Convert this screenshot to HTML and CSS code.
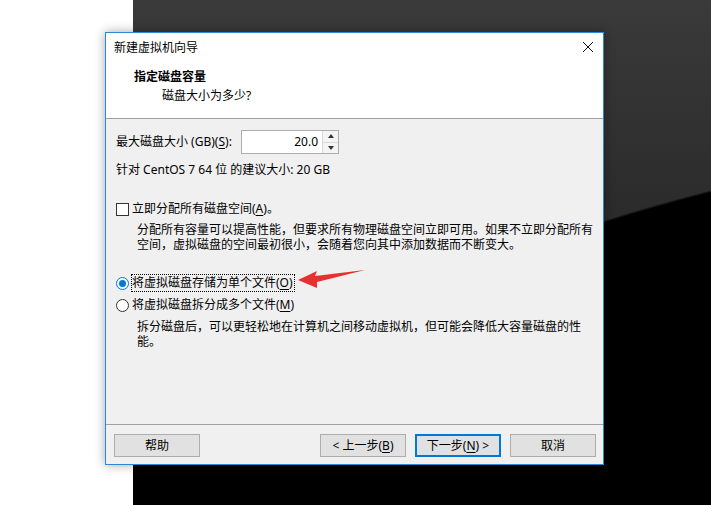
FILE: index.html
```html
<!DOCTYPE html>
<html>
<head>
    <title>新建虚拟机向导</title>
    <link rel="stylesheet" href="styles.css">
</head>
<body>
    <div class="wizard">
        <!-- 标题栏 -->
        <div class="titlebar">
            <span class="titlebar-text">新建虚拟机向导</span>
            <svg class="close-icon" width="12" height="12" viewBox="0 0 12 12">
                <path d="M1 1 L11 11 M11 1 L1 11" stroke="#111" stroke-width="1" fill="none"/>
            </svg>
        </div>

        <!-- 步骤说明 -->
        <div class="wizard-header">
            <div class="step-title">指定磁盘容量</div>
            <div class="step-sub">磁盘大小为多少?</div>
        </div>

        <div class="wizard-body">
            <div class="size-row">
                <div class="size-label">最大磁盘大小 (GB)(<u>S</u>):</div>
                <div class="spin">
                    <div class="spin-value">20.0</div>
                    <div class="spin-btns">
                        <div class="spin-btn"><span class="tri-up"></span></div>
                        <div class="spin-btn"><span class="tri-down"></span></div>
                    </div>
                </div>
            </div>
            <div class="hint">针对 CentOS 7 64 位 的建议大小: 20 GB</div>

            <div class="option-row check-row">
                <span class="checkbox"></span>
                <span>立即分配所有磁盘空间(<u>A</u>)。</span>
            </div>
            <div class="desc">分配所有容量可以提高性能，但要求所有物理磁盘空间立即可用。如果不立即分配所有空间，虚拟磁盘的空间最初很小，会随着您向其中添加数据而不断变大。</div>

            <div class="option-row radio-row first-radio">
                <span class="radio checked"></span>
                <span class="focus-label">将虚拟磁盘存储为单个文件(<u>O</u>)</span>
            </div>
            <div class="option-row radio-row">
                <span class="radio"></span>
                <span class="plain-label">将虚拟磁盘拆分成多个文件(<u>M</u>)</span>
            </div>
            <div class="desc desc-split">拆分磁盘后，可以更轻松地在计算机之间移动虚拟机，但可能会降低大容量磁盘的性能。</div>
        </div>

        <!-- 标注箭头 -->
        <svg class="note-arrow" width="72" height="30" viewBox="0 0 72 30">
            <polygon points="2,14 21,5 19,10 69,4 21,16 21,22" fill="#e8312f"/>
        </svg>

        <!-- 底部按钮 -->
        <div class="wizard-footer">
            <div class="btn">帮助</div>
            <div class="btn btn-back">&lt; 上一步(<u>B</u>)</div>
            <div class="btn btn-default">下一步(<u>N</u>) &gt;</div>
            <div class="btn">取消</div>
        </div>
    </div>
</body>
</html>
```

FILE: styles.css
```css
body {
    margin: 0;
    height: 505px;
    overflow: hidden;
    font-family: "Noto Sans", "Noto Sans CJK SC", sans-serif;
    font-size: 12px;
    color: #000;
    background:
        linear-gradient(to right, #fff 133px, transparent 133px),
        radial-gradient(ellipse 1200px 536px at 1300px 657px, #000 99.6%, rgba(0,0,0,0) 100%),
        linear-gradient(to bottom, transparent 464px, #000 464px),
        linear-gradient(#3a3a3a, #2a2a2a 230px);
}
u {
    text-decoration: underline;
    text-underline-offset: 2px;
}
.wizard {
    position: relative;
    margin: 32px 0 0 105px;
    width: 499px;
    height: 433px;
    box-sizing: border-box;
    border: 1px solid #2b88d8;
    background: #f0f0f0;
    display: flex;
    flex-direction: column;
    box-shadow: 0 0 10px rgba(0,0,0,0.35);
}
.titlebar {
    height: 29px;
    background: #fff;
    display: flex;
    align-items: center;
    justify-content: space-between;
    padding: 0 9px 0 8px;
}
.titlebar-text {
    line-height: 29px;
}
.close-icon {
    margin-bottom: 1px;
}
.wizard-header {
    background: #fff;
    padding: 7px 0 14px 28px;
    border-bottom: 1px solid #a0a0a0;
}
.step-title {
    font-weight: bold;
    line-height: 16px;
}
.step-sub {
    line-height: 16px;
    margin-top: 3px;
    padding-left: 28px;
}
.wizard-body {
    flex: 1;
    padding: 11px 0 0 10px;
}
.size-row {
    display: flex;
    align-items: center;
    height: 24px;
}
.size-label {
    width: 125px;
    line-height: 24px;
}
.spin {
    display: flex;
    width: 98px;
    height: 24px;
    box-sizing: border-box;
    border: 1px solid #adadad;
    background: #fff;
}
.spin-value {
    flex: 1;
    text-align: right;
    line-height: 22px;
    padding-right: 4px;
}
.spin-btns {
    width: 15px;
    display: flex;
    flex-direction: column;
    border-left: 1px solid #d9d9d9;
    background: #f4f4f4;
}
.spin-btn {
    flex: 1;
    display: flex;
    align-items: center;
    justify-content: center;
}
.spin-btn + .spin-btn {
    border-top: 1px solid #d9d9d9;
}
.tri-up {
    border-left: 3px solid transparent;
    border-right: 3px solid transparent;
    border-bottom: 4px solid #333;
}
.tri-down {
    border-left: 3px solid transparent;
    border-right: 3px solid transparent;
    border-top: 4px solid #333;
}
.hint {
    margin-top: 8px;
    line-height: 16px;
}
.option-row {
    display: flex;
    align-items: center;
}
.check-row {
    margin-top: 23px;
    line-height: 16px;
}
.checkbox {
    width: 13px;
    height: 13px;
    box-sizing: border-box;
    border: 1px solid #333;
    background: #fff;
    margin-right: 3px;
}
.desc {
    margin-top: 5px;
    padding-left: 21px;
    width: 460px;
    line-height: 15px;
}
.radio-row {
    line-height: 16px;
    height: 18px;
}
.first-radio {
    margin-top: 22px;
}
.first-radio + .radio-row {
    margin-top: 4px;
}
.radio {
    width: 13px;
    height: 13px;
    box-sizing: border-box;
    border: 1px solid #333;
    border-radius: 50%;
    background: #fff;
    margin-right: 2px;
    display: flex;
    align-items: center;
    justify-content: center;
}
.radio.checked {
    border-color: #0078d7;
}
.radio.checked::after {
    content: "";
    width: 7px;
    height: 7px;
    border-radius: 50%;
    background: #0078d7;
}
.focus-label {
    border: 1px dotted #000;
    padding: 0 1px 0 0;
    line-height: 16px;
}
.plain-label {
    padding-left: 1px;
}
.desc-split {
    margin-top: 5px;
}
.note-arrow {
    position: absolute;
    left: 190px;
    top: 233px;
}
.wizard-footer {
    border-top: 1px solid #a0a0a0;
    display: flex;
    padding: 9px 7px 7px 8px;
    gap: 9px;
}
.btn {
    width: 86px;
    height: 23px;
    box-sizing: border-box;
    border: 1px solid #adadad;
    background: #e1e1e1;
    text-align: center;
    line-height: 21px;
}
.btn-back {
    margin-left: auto;
}
.btn-default {
    border-color: #0078d7;
    box-shadow: inset 0 0 0 1px #0078d7;
}
```
